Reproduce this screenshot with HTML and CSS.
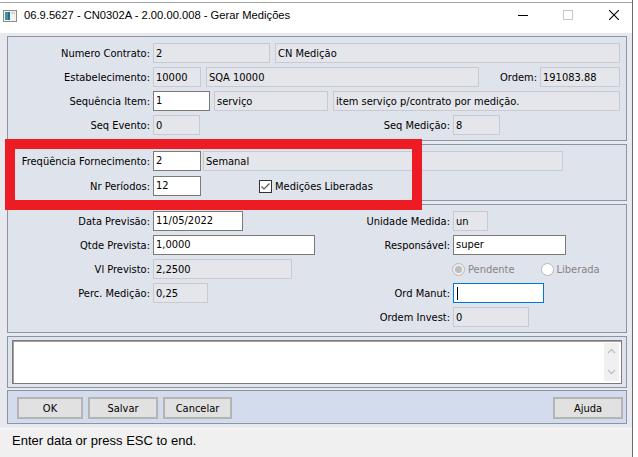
FILE: index.html
```html
<!DOCTYPE html>
<html lang="pt-BR">
<head>
  <meta charset="UTF-8">
  <title>Gerar Medições</title>
  <link rel="stylesheet" href="styles.css">
</head>
<body>
<div id="win">
  <div class="titlebar">
    <svg class="app-icon" width="14" height="12" viewBox="0 0 14 12">
      <rect x="0.5" y="0.5" width="13" height="11" fill="#f2f2f2" stroke="#8c8c8c"/>
      <rect x="2" y="2" width="3" height="8" fill="#3d9c8c"/>
      <rect x="5" y="2" width="2" height="8" fill="#2f62a3"/>
      <rect x="8" y="2" width="4" height="2" fill="#d6d6d6"/>
    </svg>
    <span class="title">06.9.5627 - CN0302A - 2.00.00.008 - Gerar Medições</span>
    <div class="controls">
      <svg class="ctl ctl-min" width="10" height="10" viewBox="0 0 10 10"><line x1="0" y1="5.5" x2="10" y2="5.5" stroke="#000"/></svg>
      <svg class="ctl ctl-max" width="10" height="10" viewBox="0 0 10 10"><rect x="0.5" y="0.5" width="9" height="9" fill="none" stroke="#c8c8c8"/></svg>
      <svg class="ctl ctl-close" width="10" height="10" viewBox="0 0 10 10"><path d="M0 0L10 10M10 0L0 10" stroke="#000" stroke-width="1.1"/></svg>
    </div>
  </div>

  <div class="client">
    <!-- contrato -->
    <div class="frame frame-contrato">
      <div class="row">
        <span class="lbl">Numero Contrato:</span>
        <span class="fld w117">2</span>
        <span class="fld w345 ml5">CN Medição</span>
      </div>
      <div class="row">
        <span class="lbl">Estabelecimento:</span>
        <span class="fld w48">10000</span>
        <span class="fld w273 ml5">SQA 10000</span>
        <span class="rlbl w61">Ordem:</span>
        <span class="fld w80">191083.88</span>
      </div>
      <div class="row">
        <span class="lbl">Sequência Item:</span>
        <span class="fld ed w57">1</span>
        <span class="fld w114 ml4">serviço</span>
        <span class="fld w287 ml5">item serviço p/contrato por medição.</span>
      </div>
      <div class="row">
        <span class="lbl">Seq Evento:</span>
        <span class="fld w47">0</span>
        <span class="rlbl w253">Seq Medição:</span>
        <span class="fld w47">8</span>
      </div>
    </div>

    <!-- fornecimento -->
    <div class="frame frame-fornec">
      <div class="row">
        <span class="lbl">Freqüência Fornecimento:</span>
        <span class="fld ed w48">2</span>
        <span class="fld w360 ml2">Semanal</span>
      </div>
      <div class="row">
        <span class="lbl">Nr Períodos:</span>
        <span class="fld ed w48">12</span>
        <span class="check">
          <svg width="13" height="13" viewBox="0 0 13 13">
            <rect x="0.5" y="0.5" width="12" height="12" fill="#fff" stroke="#333"/>
            <path d="M2.5 6.5L5 9L10.5 3.5" fill="none" stroke="#555" stroke-width="1.2"/>
          </svg>
          Medições Liberadas
        </span>
      </div>
    </div>

    <!-- previsao -->
    <div class="frame frame-prev">
      <div class="grid-row">
        <div class="cell"><span class="lbl">Data Previsão:</span><span class="fld ed w90">11/05/2022</span></div>
        <span class="rlbl">Unidade Medida:</span>
        <span class="fld w35">un</span>
      </div>
      <div class="grid-row">
        <div class="cell"><span class="lbl">Qtde Prevista:</span><span class="fld ed w162">1,0000</span></div>
        <span class="rlbl">Responsável:</span>
        <span class="fld ed w113">super</span>
      </div>
      <div class="grid-row">
        <div class="cell"><span class="lbl">Vl Previsto:</span><span class="fld w139">2,2500</span></div>
        <span></span>
        <div class="radios">
          <span class="radio on"><i></i>Pendente</span>
          <span class="radio"><i></i>Liberada</span>
        </div>
      </div>
      <div class="grid-row">
        <div class="cell"><span class="lbl">Perc. Medição:</span><span class="fld w55">0,25</span></div>
        <span class="rlbl">Ord Manut:</span>
        <span class="fld ed focus w91"><span class="caret"></span></span>
      </div>
      <div class="grid-row">
        <div class="cell"></div>
        <span class="rlbl">Ordem Invest:</span>
        <span class="fld w76">0</span>
      </div>
    </div>

    <!-- obs -->
    <div class="frame frame-obs">
      <div class="memo">
        <div class="vscroll">
          <svg width="9" height="6" viewBox="0 0 9 6"><path d="M1 5L4.5 1.5L8 5" fill="none" stroke="#bfbfbf" stroke-width="1.3"/></svg>
          <svg width="9" height="6" viewBox="0 0 9 6"><path d="M1 1L4.5 4.5L8 1" fill="none" stroke="#bfbfbf" stroke-width="1.3"/></svg>
        </div>
      </div>
    </div>

    <!-- botoes -->
    <div class="frame frame-btns">
      <button class="btn w66">OK</button>
      <button class="btn w70">Salvar</button>
      <button class="btn w69">Cancelar</button>
      <button class="btn w70 push">Ajuda</button>
    </div>
  </div>

  <div class="status">Enter data or press ESC to end.</div>

  <div class="marker"></div>
</div>
</body>
</html>
```

FILE: styles.css
```css
* {
  margin: 0;
  padding: 0;
  box-sizing: border-box;
}

body {
  background: #fff;
  color: #000;
  font: 11px "DejaVu Sans Condensed", "Liberation Sans", sans-serif;
}

#win {
  position: relative;
  width: 633px;
  height: 457px;
  border-right: 1px solid #6b6b6b;
  display: flex;
  flex-direction: column;
}

/* barra de titulo */
.titlebar {
  flex: none;
  height: 31px;
  margin-top: 2px;
  border-top: 1px solid #a3a3a3;
  background: #fff;
  display: flex;
  align-items: flex-start;
  padding-top: 5px;
}

.app-icon {
  margin: 2px 0 0 3px;
}

.title {
  margin-left: 7px;
  font: 11.2px/14px "Liberation Sans", sans-serif;
}

.controls {
  margin-left: auto;
  display: flex;
  padding: 2px 13px 0 0;
}

.ctl-max {
  margin-left: 35px;
}

.ctl-close {
  margin-left: 36px;
}

/* area cliente */
.client {
  flex: none;
  height: 395px;
  background: #e7e9ef;
  padding: 3px 5px 0 7px;
}

.frame {
  background: #dfe3eb;
  border: 1px solid #8c95a5;
  margin-bottom: 3px;
}

.frame-contrato {
  padding: 6px 0 5px;
  display: flex;
  flex-direction: column;
  gap: 4px;
}

.frame-fornec {
  padding: 6px 0 4px;
  display: flex;
  flex-direction: column;
  gap: 5px;
}

.frame-prev {
  padding: 6px 0 5px;
  display: flex;
  flex-direction: column;
  gap: 4px;
}

.frame-obs {
  padding: 3px 4px;
  margin-bottom: 2px;
}

.frame-btns {
  background: #d3dcec;
  padding: 6px 3px 4px 9px;
  display: flex;
  gap: 5px;
}

.row {
  display: flex;
  align-items: center;
  height: 20px;
}

.grid-row {
  display: grid;
  grid-template-columns: 312px 133px 1fr;
  align-items: center;
  height: 20px;
}

.cell {
  display: flex;
  align-items: center;
}

.lbl {
  flex: none;
  width: 145px;
  padding-right: 3px;
  text-align: right;
  white-space: nowrap;
}

.rlbl {
  flex: none;
  padding-right: 3px;
  text-align: right;
  white-space: nowrap;
}

.fld {
  flex: none;
  display: block;
  height: 20px;
  padding: 1px 2px 0;
  line-height: 18px;
  border: 1px solid #c7cad1;
  background: #e4e6eb;
  white-space: nowrap;
  overflow: hidden;
}

.fld.ed {
  background: #fff;
  border-color: #7a7a7a;
  padding-top: 0;
}

.fld.focus {
  border-color: #0078d7;
}

.caret {
  display: inline-block;
  width: 1px;
  height: 13px;
  margin: 3px 0 0 1px;
  background: #000;
  vertical-align: top;
}

.w35 { width: 35px; }
.w47 { width: 47px; }
.w48 { width: 48px; }
.w55 { width: 55px; }
.w57 { width: 57px; }
.w61 { width: 61px; }
.w66 { width: 66px; }
.w69 { width: 69px; }
.w70 { width: 70px; }
.w76 { width: 76px; }
.w80 { width: 80px; }
.w90 { width: 90px; }
.w91 { width: 91px; }
.w113 { width: 113px; }
.w114 { width: 114px; }
.w117 { width: 117px; }
.w139 { width: 139px; }
.w162 { width: 162px; }
.w253 { width: 253px; }
.w273 { width: 273px; }
.w287 { width: 287px; }
.w345 { width: 345px; }
.w360 { width: 360px; }

.ml2 { margin-left: 2px; }
.ml4 { margin-left: 4px; }
.ml5 { margin-left: 5px; }

.check {
  display: flex;
  align-items: center;
  gap: 3px;
  margin-left: 58px;
}

.radios {
  display: flex;
  align-items: center;
  margin-left: -1px;
  color: #858585;
}

.radio {
  display: flex;
  align-items: center;
  gap: 3px;
}

.radio + .radio {
  margin-left: 26px;
}

.radio i {
  width: 13px;
  height: 13px;
  border: 1px solid #b9b9b9;
  border-radius: 50%;
  background: #fff;
  display: flex;
  align-items: center;
  justify-content: center;
}

.radio.on i {
  background: #ececec;
}

.radio.on i::after {
  content: "";
  width: 7px;
  height: 7px;
  border-radius: 50%;
  background: #bdbdbd;
}

.memo {
  position: relative;
  height: 44px;
  background: #fff;
  border: 1px solid #7a7a7a;
  box-shadow: inset 1px 1px 0 #a0a0a0;
  display: flex;
  justify-content: flex-end;
}

.vscroll {
  width: 15px;
  margin: 2px 2px 2px 0;
  background: #f0f0f0;
  display: flex;
  flex-direction: column;
  justify-content: space-between;
  align-items: center;
  padding: 5px 0 6px;
}

.btn {
  height: 22px;
  border: 2px solid #b4b4b4;
  background: #e1e1e1;
  font: 11px "DejaVu Sans Condensed", "Liberation Sans", sans-serif;
  color: #000;
}

.push {
  margin-left: auto;
}

.status {
  flex: 1;
  background: #f0f0f0;
  border-top: 1px solid #f8f8f8;
  padding: 4px 0 0 12px;
  font: 13px/16px "Liberation Sans", sans-serif;
}

/* destaque vermelho sobre a tela */
.marker {
  position: absolute;
  left: 5px;
  top: 139px;
  width: 417px;
  height: 71px;
  border: 10px solid #ed1c24;
  pointer-events: none;
}
```
